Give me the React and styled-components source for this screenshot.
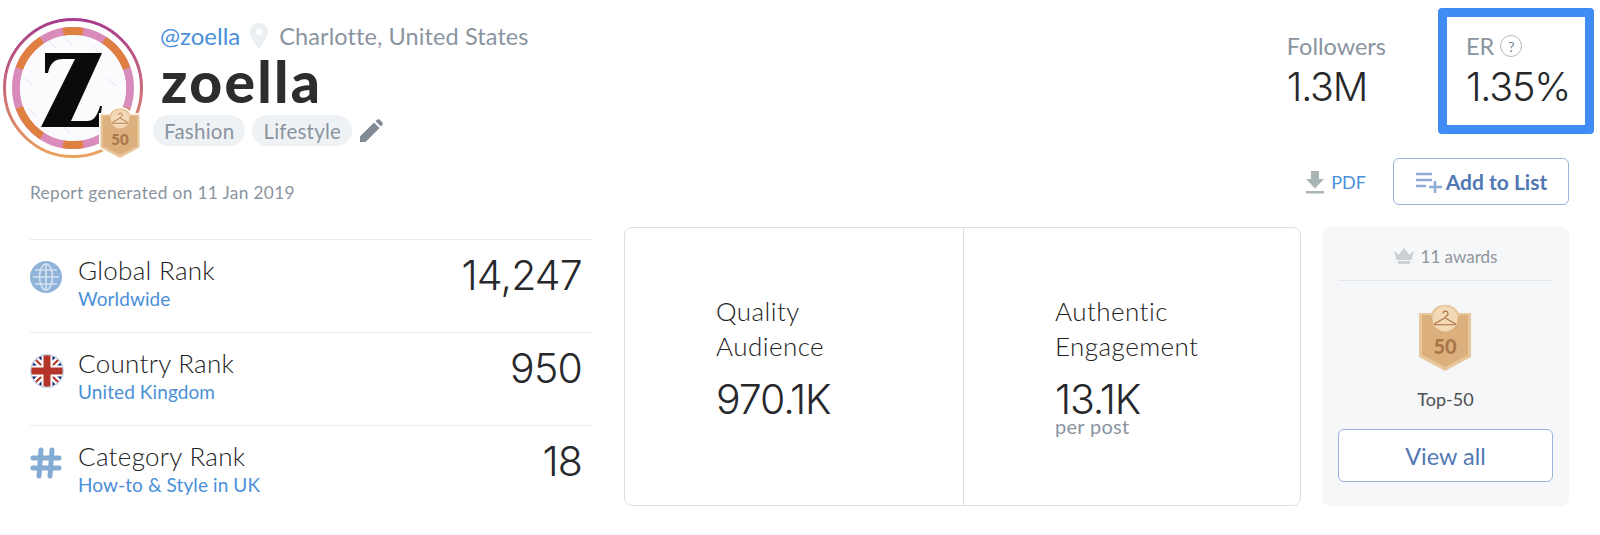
import React from "react";
import styled, { createGlobalStyle } from "styled-components";

const Global = createGlobalStyle`
  html, body { margin: 0; padding: 0; background: #fff; }
  body { font-family: Lato, "Open Sans", "Liberation Sans", sans-serif; color: #26282b; }
`;

const NUM = `Inter, Lato, "Liberation Sans", sans-serif`;

const Page = styled.div`
  width: 1600px;
  height: 535px;
  overflow: hidden;
  display: flex;
  flex-direction: column;
`;
const Header = styled.header`
  display: flex;
  justify-content: space-between;
  height: 227px;
`;
const Identity = styled.div`
  display: flex;
  flex-direction: column;
`;
const IdentityTop = styled.div`
  display: flex;
  padding: 18px 0 0 3px;
`;
const Avatar = styled.div`
  position: relative;
  width: 140px;
  height: 140px;
`;
const AvatarBadge = styled.div`
  position: absolute;
  left: 96px;
  top: 89px;
`;
const Who = styled.div`
  display: flex;
  flex-direction: column;
  margin-left: 10px;
`;
const HandleRow = styled.div`
  display: flex;
  align-items: center;
  height: 36px;
  margin-bottom: -3px;
  padding-left: 7px;
`;
const Handle = styled.span`
  color: #4a90d9;
  font-size: 24px;
  line-height: 28px;
`;
const PinSlot = styled.span`
  display: inline-flex;
  margin-left: 10px;
`;
const Location = styled.span`
  color: #8a949f;
  margin-left: 11px;
  font-size: 23.5px;
  line-height: 28px;
  letter-spacing: 0.1px;
`;
const Name = styled.h1`
  margin: 0 0 0 8px;
  font-size: 57px;
  line-height: 60px;
  font-weight: 900;
  letter-spacing: 2.3px;
  color: #2d2d2d;
`;
const Tags = styled.div`
  display: flex;
  align-items: center;
  gap: 7px;
  margin-top: 4px;
`;
const Tag = styled.span`
  display: inline-flex;
  align-items: center;
  height: 31px;
  padding: 0 11px;
  border-radius: 16px;
  background: #eff2f5;
  color: #8a949f;
  font-size: 20.5px;
  letter-spacing: 0.25px;
`;
const Generated = styled.div`
  margin: 25px 0 0 30px;
  font-size: 17.3px;
  line-height: 20px;
  color: #8a949f;
  letter-spacing: 0.35px;
`;
const RightHead = styled.div`
  display: flex;
  flex-direction: column;
  align-items: flex-end;
  padding: 8px 6px 0 0;
`;
const Stats = styled.div`
  display: flex;
  align-items: flex-start;
`;
const Stat = styled.div`
  padding: 23px 0 0 0;
  margin-right: 52px;
`;
const HighlightStat = styled.div`
  box-sizing: border-box;
  width: 156px;
  height: 126px;
  border: 9px solid #3f8cf5;
  border-radius: 4px;
  padding: 14px 0 0 19px;
`;
const StatLabel = styled.div`
  display: flex;
  align-items: center;
  gap: 6px;
  height: 30px;
  font-size: 23.5px;
  color: #8a949f;
`;
const StatValue = styled.div`
  font-family: ${NUM};
  font-size: 39.5px;
  line-height: 52px;
  font-weight: 300;
  letter-spacing: -1.2px;
  color: #26282b;
`;
const Help = styled.span`
  box-sizing: border-box;
  width: 22px;
  height: 22px;
  border: 1px solid #b5b9bd;
  border-radius: 50%;
  display: inline-flex;
  align-items: center;
  justify-content: center;
  font-size: 14px;
  color: #777f87;
`;
const Actions = styled.div`
  display: flex;
  align-items: center;
  margin: 24px 25px 0 0;
`;
const PdfLink = styled.span`
  display: inline-flex;
  align-items: center;
  gap: 6px;
  margin-right: 27px;
  color: #4a90d9;
  font-size: 18px;
`;
const ListButton = styled.span`
  box-sizing: border-box;
  display: inline-flex;
  align-items: center;
  justify-content: center;
  gap: 3px;
  width: 176px;
  height: 47px;
  border: 1px solid #98b4de;
  border-radius: 6px;
  color: #5178b4;
  font-size: 21px;
  font-weight: 700;
`;
const Body = styled.main`
  display: flex;
  align-items: flex-start;
  padding-left: 30px;
`;
const Ranks = styled.div`
  width: 562px;
  margin-top: 12px;
  margin-right: 32px;
`;
const RankRow = styled.div`
  box-sizing: border-box;
  height: 93px;
  border-top: 1px solid #e6ecf2;
  display: flex;
  padding: 15px 10px 0 0;
`;
const RankIcon = styled.div`
  width: 48px;
  padding-top: 6px;
  flex: none;
`;
const RankText = styled.div`
  flex: 1;
`;
const RankName = styled.div`
  font-size: 26px;
  line-height: 30px;
  font-weight: 300;
  letter-spacing: 0.3px;
  color: #222;
`;
const RankSub = styled.div`
  font-size: 19px;
  line-height: 28px;
  color: #4a90d9;
  letter-spacing: 0.1px;
`;
const RankValue = styled.div`
  font-family: ${NUM};
  font-size: 41px;
  line-height: 40px;
  font-weight: 300;
  letter-spacing: -0.8px;
  color: #26282b;
`;
const QualityCard = styled.div`
  box-sizing: border-box;
  display: grid;
  grid-template-columns: 338px 1fr;
  width: 677px;
  height: 279px;
  margin-right: 21px;
  border: 1px solid #dcdfe2;
  border-radius: 8px;
`;
const QualityCell = styled.div`
  padding: 66px 0 0 ${(p) => p.$inset}px;
  & + & { border-left: 1px solid #dcdfe2; }
`;
const QualityLabel = styled.div`
  font-size: 26px;
  line-height: 34.5px;
  font-weight: 300;
  letter-spacing: 0.45px;
  color: #222;
`;
const QualityValue = styled.div`
  font-family: ${NUM};
  font-size: 41px;
  line-height: 40px;
  font-weight: 300;
  letter-spacing: -1.1px;
  margin-top: 16px;
`;
const QualityNote = styled.div`
  font-size: 20px;
  line-height: 15px;
  color: #8a949f;
  letter-spacing: 0.3px;
`;
const Awards = styled.aside`
  box-sizing: border-box;
  width: 247px;
  height: 279px;
  background: #f6f7f9;
  border-radius: 8px;
  padding: 0 16px;
  display: flex;
  flex-direction: column;
  align-items: stretch;
`;
const AwardsHead = styled.div`
  box-sizing: border-box;
  height: 54px;
  padding-top: 5px;
  display: flex;
  align-items: center;
  justify-content: center;
  gap: 7px;
  font-size: 17px;
  color: #8f969d;
  border-bottom: 1px solid #e3e6ea;
`;
const AwardBadge = styled.div`
  display: flex;
  justify-content: center;
  margin-top: 22px;
  margin-right: 2px;
`;
const AwardName = styled.div`
  text-align: center;
  margin-top: 14px;
  font-size: 18px;
  line-height: 24px;
  color: #4d4f52;
`;
const ViewAll = styled.div`
  box-sizing: border-box;
  height: 53px;
  margin-top: 18px;
  background: #fff;
  border: 1px solid #98b4de;
  border-radius: 6px;
  display: flex;
  align-items: center;
  justify-content: center;
  font-size: 23.5px;
  color: #5178b4;
`;

const TopBadge = ({ width, outlined }) => (
  <svg width={width} viewBox="-2 -2 56 70" style={{ display: "block", overflow: "visible" }}>
    {outlined && <path d="M0 8h12a16 16 0 0 1 28 0h12v44L26 66 0 52z" fill="#fff" stroke="#fff" strokeWidth="4" />}
    <path d="M0 8h12a16 16 0 0 1 28 0h12v44L26 66 0 52z" fill="#e8c79c" />
    <path d="M3 10h9a15 15 0 0 0 28 0h9v40L26 62 3 50z" fill="#dbb07c" />
    <circle cx="26" cy="14" r="12.500" fill="#f3d9b6" />
    <path d="M24 8.500a2.500 2.500 0 1 1 3.500 2.400c-.9.400-1.500.900-1.500 1.900M26 12.800l-10 5.600c-.8.600-.4 1.300.4 1.300h19.200c.8 0 1.200-.7.400-1.300z" fill="none" stroke="#a9703f" strokeWidth="1.100" />
    <text x="26" y="49" textAnchor="middle" fontFamily="Lato, sans-serif" fontWeight="900" fontSize="20" fill="#a9764a">50</text>
  </svg>
);

const polar = (deg, r) => {
  const a = ((deg - 90) * Math.PI) / 180;
  return `${(70 + r * Math.cos(a)).toFixed(2)} ${(70 + r * Math.sin(a)).toFixed(2)}`;
};
const arc = (from, to) => `M${polar(from, 57)}A57 57 0 0 1 ${polar(to, 57)}`;
const orangeArcs = [[-10, 10], [33, 70], [110, 147], [170, 190], [213, 250], [290, 327]];

const AvatarArt = () => (
  <svg width="140" height="140" viewBox="0 0 140 140">
    <defs>
      <linearGradient id="ring" x1="0.5" y1="0" x2="0.5" y2="1">
        <stop offset="0" stopColor="#a63c8c" />
        <stop offset="0.500" stopColor="#c9697a" />
        <stop offset="1" stopColor="#e9a25e" />
      </linearGradient>
      <clipPath id="inner"><circle cx="70" cy="70" r="53" /></clipPath>
    </defs>
    <circle cx="70" cy="70" r="68.500" fill="none" stroke="url(#ring)" strokeWidth="3" />
    <circle cx="70" cy="70" r="57" fill="none" stroke="#d98cbc" strokeWidth="8" />
    {orangeArcs.map(([a, b]) => (
      <path key={a} d={arc(a, b)} fill="none" stroke="#e07f42" strokeWidth="8" />
    ))}
    <circle cx="70" cy="70" r="53" fill="#fbfbfd" />
    <g clipPath="url(#inner)" stroke="#e2e5ee" strokeWidth="1">
      <path d="M22 60l8 8M45 22l8 8M60 108l8 8M90 28l8 8M105 60l8 8M25 90l8 8M88 106l8 8M62 20l8 8" />
    </g>
    <path d="M42 35H99L68 103H84C90 103 94 99 97 88H99L96 109H38L72 41H60C52 41 47 45 45 55H42z" fill="#0b0b0b" />
  </svg>
);

const Globe = () => (
  <svg width="32" height="32" viewBox="0 0 32 32">
    <circle cx="16" cy="16" r="16" fill="#8fb3d9" />
    <g fill="none" stroke="#d3e1f0" strokeWidth="1.600">
      <ellipse cx="16" cy="16" rx="6.500" ry="13" />
      <path d="M16 3v26M3 16h26M5 9h22M5 23h22" />
    </g>
  </svg>
);

const Flag = () => (
  <svg width="34" height="34" viewBox="0 0 34 34">
    <defs><clipPath id="flag"><circle cx="17" cy="17" r="16" /></clipPath></defs>
    <g clipPath="url(#flag)">
      <rect width="34" height="34" fill="#0d1a66" />
      <path d="M0 0L34 34M34 0L0 34" stroke="#fff" strokeWidth="7" />
      <path d="M0 0L34 34M34 0L0 34" stroke="#b5342a" strokeWidth="2" />
      <path d="M17 0V34M0 17H34" stroke="#fff" strokeWidth="11" />
      <path d="M17 0V34M0 17H34" stroke="#b5342a" strokeWidth="7" />
    </g>
    <circle cx="17" cy="17" r="16.300" fill="none" stroke="#c3d4e6" strokeWidth="1.200" />
  </svg>
);

const Hash = () => (
  <svg width="32" height="32" viewBox="0 0 32 32">
    <path d="M11 3L9 29M22 3L20 29M3 11H29M3 21H29" stroke="#84abd3" strokeWidth="5" strokeLinecap="round" fill="none" />
  </svg>
);

const Pin = () => (
  <svg width="18" height="26" viewBox="0 0 18 26">
    <path fillRule="evenodd" d="M9 0a9 9 0 0 1 9 9c0 6-9 17-9 17S0 15 0 9a9 9 0 0 1 9-9zm0 6a3 3 0 1 0 0 6 3 3 0 0 0 0-6z" fill="#eceff2" />
  </svg>
);

const Pencil = () => (
  <svg width="24" height="24" viewBox="0 0 24 24">
    <path d="M1 23v-5.500L15 3.500 20.500 9 6.500 23zM16.500 2l2-1.500c.6-.5 1.400-.5 2 0l3 3c.5.6.5 1.400 0 2L22 7.500z" fill="#7f8a95" />
  </svg>
);

const Download = () => (
  <svg width="20" height="24" viewBox="0 0 20 24">
    <path d="M6 1h8v8h5l-9 9.500L1 9h5zM1 21h18v2.500H1z" fill="#a9b4b4" />
  </svg>
);

const ListPlus = () => (
  <svg width="28" height="22" viewBox="0 0 28 22">
    <path d="M1 3h16M1 9h16M1 15h10M20 10v12M14 16h13" stroke="#8fabd8" strokeWidth="2.500" fill="none" />
  </svg>
);

const Crown = () => (
  <svg width="20" height="16" viewBox="0 0 20 16">
    <path d="M0 3l5 3.500L10 0l5 6.500L20 3l-2.500 9h-15zM4 13h12v3H4z" fill="#ccd0d5" />
  </svg>
);

const ranks = [
  { name: "Global Rank", sub: "Worldwide", value: "14,247", icon: <Globe /> },
  { name: "Country Rank", sub: "United Kingdom", value: "950", icon: <Flag /> },
  { name: "Category Rank", sub: "How-to & Style in UK", value: "18", icon: <Hash /> },
];

export default function App() {
  return (
    <Page>
      <Global />
      <Header>
        <Identity>
          <IdentityTop>
            <Avatar>
              <AvatarArt />
              <AvatarBadge><TopBadge width={42} outlined /></AvatarBadge>
            </Avatar>
            <Who>
              <HandleRow>
                <Handle>@zoella</Handle>
                <PinSlot><Pin /></PinSlot>
                <Location>Charlotte, United States</Location>
              </HandleRow>
              <Name>zoella</Name>
              <Tags>
                <Tag>Fashion</Tag>
                <Tag>Lifestyle</Tag>
                <Pencil />
              </Tags>
            </Who>
          </IdentityTop>
          <Generated>Report generated on 11 Jan 2019</Generated>
        </Identity>
        <RightHead>
          <Stats>
            <Stat>
              <StatLabel>Followers</StatLabel>
              <StatValue>1.3M</StatValue>
            </Stat>
            <HighlightStat>
              <StatLabel>ER <Help>?</Help></StatLabel>
              <StatValue>1.35%</StatValue>
            </HighlightStat>
          </Stats>
          <Actions>
            <PdfLink><Download /> PDF</PdfLink>
            <ListButton><ListPlus /> Add to List</ListButton>
          </Actions>
        </RightHead>
      </Header>
      <Body>
        <Ranks>
          {ranks.map((r) => (
            <RankRow key={r.name}>
              <RankIcon>{r.icon}</RankIcon>
              <RankText>
                <RankName>{r.name}</RankName>
                <RankSub>{r.sub}</RankSub>
              </RankText>
              <RankValue>{r.value}</RankValue>
            </RankRow>
          ))}
        </Ranks>
        <QualityCard>
          <QualityCell $inset={91}>
            <QualityLabel>Quality<br />Audience</QualityLabel>
            <QualityValue>970.1K</QualityValue>
          </QualityCell>
          <QualityCell $inset={91}>
            <QualityLabel>Authentic<br />Engagement</QualityLabel>
            <QualityValue>13.1K</QualityValue>
            <QualityNote>per post</QualityNote>
          </QualityCell>
        </QualityCard>
        <Awards>
          <AwardsHead><Crown /> 11 awards</AwardsHead>
          <AwardBadge><TopBadge width={56} /></AwardBadge>
          <AwardName>Top-50</AwardName>
          <ViewAll>View all</ViewAll>
        </Awards>
      </Body>
    </Page>
  );
}
